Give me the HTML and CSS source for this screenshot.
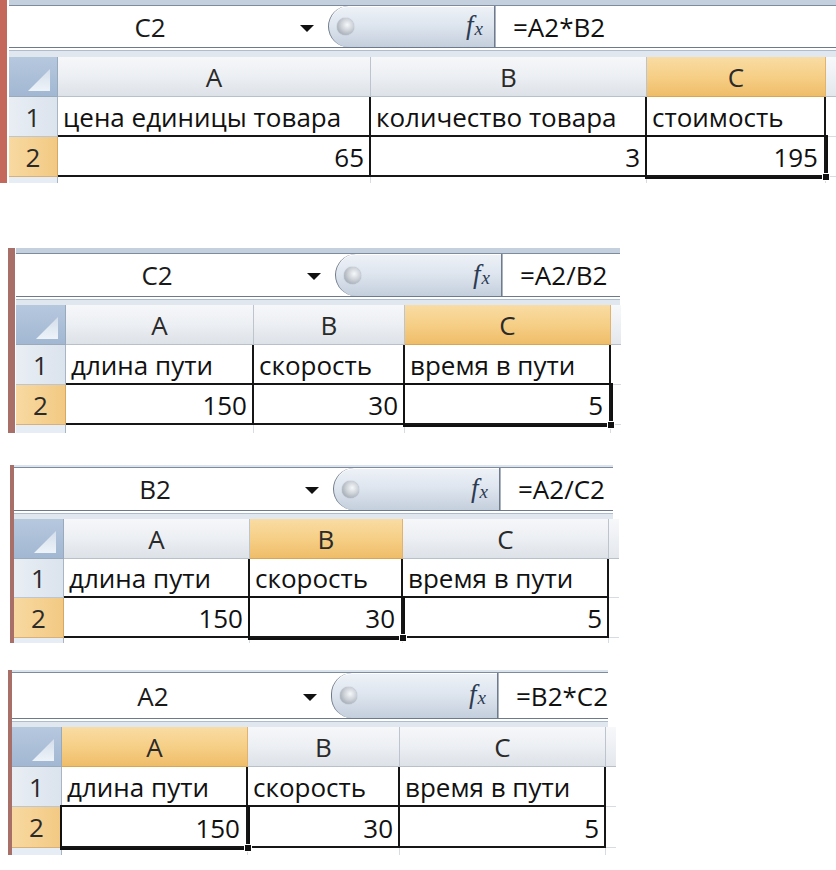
FILE: index.html
```html
<!DOCTYPE html>
<html lang="ru">
<head>
<meta charset="utf-8">
<title>Excel</title>
<link rel="stylesheet" href="styles.css">
</head>
<body>
<div class="page">

  <div class="sheet p1">
    <div class="fbar">
      <div class="namebox">C2</div>
      <div class="arrow"></div>
      <div class="pill"><span class="knob"></span><span class="fx">f<i>x</i></span></div>
      <div class="formula">=A2*B2</div>
    </div>
    <div class="fsep"></div>
    <div class="grid">
      <div class="corner"></div>
      <div class="ch">A</div>
      <div class="ch">B</div>
      <div class="ch sel">C</div>
      <div class="ch extra"></div>

      <div class="rh">1</div>
      <div class="cell">цена единицы товара</div>
      <div class="cell">количество товара</div>
      <div class="cell">стоимость</div>
      <div class="cell extra"></div>

      <div class="rh sel">2</div>
      <div class="cell num">65</div>
      <div class="cell num">3</div>
      <div class="cell num active">195<span class="handle"></span></div>
      <div class="cell extra"></div>

      <div class="rh stub"></div>
      <div class="cell stub"></div>
      <div class="cell stub"></div>
      <div class="cell stub"></div>
      <div class="cell stub extra"></div>
    </div>
  </div>

  <div class="sheet p2">
    <div class="fbar">
      <div class="namebox">C2</div>
      <div class="arrow"></div>
      <div class="pill"><span class="knob"></span><span class="fx">f<i>x</i></span></div>
      <div class="formula">=A2/B2</div>
    </div>
    <div class="fsep"></div>
    <div class="grid">
      <div class="corner"></div>
      <div class="ch">A</div>
      <div class="ch">B</div>
      <div class="ch sel">C</div>
      <div class="ch extra"></div>

      <div class="rh">1</div>
      <div class="cell">длина пути</div>
      <div class="cell">скорость</div>
      <div class="cell">время в пути</div>
      <div class="cell extra"></div>

      <div class="rh sel">2</div>
      <div class="cell num">150</div>
      <div class="cell num">30</div>
      <div class="cell num active">5<span class="handle"></span></div>
      <div class="cell extra"></div>

      <div class="rh stub"></div>
      <div class="cell stub"></div>
      <div class="cell stub"></div>
      <div class="cell stub"></div>
      <div class="cell stub extra"></div>
    </div>
  </div>

  <div class="sheet p3">
    <div class="fbar">
      <div class="namebox">B2</div>
      <div class="arrow"></div>
      <div class="pill"><span class="knob"></span><span class="fx">f<i>x</i></span></div>
      <div class="formula">=A2/C2</div>
    </div>
    <div class="fsep"></div>
    <div class="grid">
      <div class="corner"></div>
      <div class="ch">A</div>
      <div class="ch sel">B</div>
      <div class="ch">C</div>
      <div class="ch extra"></div>

      <div class="rh">1</div>
      <div class="cell">длина пути</div>
      <div class="cell">скорость</div>
      <div class="cell">время в пути</div>
      <div class="cell extra"></div>

      <div class="rh sel">2</div>
      <div class="cell num">150</div>
      <div class="cell num active">30<span class="handle"></span></div>
      <div class="cell num">5</div>
      <div class="cell extra"></div>

      <div class="rh stub"></div>
      <div class="cell stub"></div>
      <div class="cell stub"></div>
      <div class="cell stub"></div>
      <div class="cell stub extra"></div>
    </div>
  </div>

  <div class="sheet p4">
    <div class="fbar">
      <div class="namebox">A2</div>
      <div class="arrow"></div>
      <div class="pill"><span class="knob"></span><span class="fx">f<i>x</i></span></div>
      <div class="formula">=B2*C2</div>
    </div>
    <div class="fsep"></div>
    <div class="grid">
      <div class="corner"></div>
      <div class="ch sel">A</div>
      <div class="ch">B</div>
      <div class="ch">C</div>
      <div class="ch extra"></div>

      <div class="rh">1</div>
      <div class="cell">длина пути</div>
      <div class="cell">скорость</div>
      <div class="cell">время в пути</div>
      <div class="cell extra"></div>

      <div class="rh sel">2</div>
      <div class="cell num active">150<span class="handle"></span></div>
      <div class="cell num">30</div>
      <div class="cell num">5</div>
      <div class="cell extra"></div>

      <div class="rh stub"></div>
      <div class="cell stub"></div>
      <div class="cell stub"></div>
      <div class="cell stub"></div>
      <div class="cell stub extra"></div>
    </div>
  </div>

</div>
</body>
</html>
```
FILE: styles.css
```css
* { box-sizing: border-box; }

html, body {
  margin: 0;
  padding: 0;
  background: #ffffff;
}

body {
  width: 836px;
  height: 870px;
  overflow: hidden;
  font-family: "Open Sans", "Noto Sans", sans-serif;
  font-size: 26px;
  color: #111;
}

.page {
  display: flex;
  flex-direction: column;
  align-items: flex-start;
}

/* ---------- sheet wrapper ---------- */
.sheet {
  display: flex;
  flex-direction: column;
  border-left: 7px solid #a86f68;
  background: #fff;
}

.p1 { width: 836px; margin-left: 0; border-left-color: #c5685c; padding-left: 2px; }
.p2 { width: 612px; margin-left: 8px; margin-top: 65px; padding-left: 1px; }
.p3 { width: 603px; margin-left: 10px; margin-top: 32px; border-left-width: 4px; }
.p4 { width: 600px; margin-left: 8px; margin-top: 27px; border-left-width: 4px; }

/* ---------- formula bar ---------- */
.fbar {
  display: flex;
  align-items: stretch;
  background: #fff;
  border-top: 1px solid #7e8b9c;
  border-bottom: 1px solid #6e7a89;
  box-shadow: 0 -5px 0 #c4d0de;
  margin-top: 5px;
  height: 43px;
}
.p2 .fbar { height: 44px; }
.p3 .fbar { margin-top: 2px; box-shadow: 0 -2px 0 #dbe3ec; height: 44px; }
.p4 .fbar { margin-top: 2px; box-shadow: 0 -2px 0 #dbe3ec; height: 47px; }

.namebox {
  width: 282px;
  flex: none;
  display: flex;
  align-items: center;
  justify-content: center;
  color: #1a1a1a;
}

.arrow {
  flex: none;
  align-self: center;
  width: 0;
  height: 0;
  margin-left: 9px;
  margin-right: 14px;
  border-left: 7px solid transparent;
  border-right: 7px solid transparent;
  border-top: 7px solid #111;
  margin-top: 3px;
}

.pill {
  flex: none;
  width: 167px;
  display: flex;
  align-items: center;
  justify-content: space-between;
  padding: 0 11px 0 8px;
  border: 1px solid #6f7b8b;
  border-top: none;
  border-bottom: none;
  border-radius: 21px 0 0 21px;
  background: linear-gradient(#eef2f8 0%, #dfe6ef 45%, #c4cfdd 100%);
  box-shadow: inset 0 1px 0 #fff;
}

.knob {
  width: 17px;
  height: 17px;
  border-radius: 50%;
  background: radial-gradient(circle at 60% 40%, #f6f8fa 0%, #cfd4da 40%, #8c949d 100%);
  box-shadow: 0 0 1px #778;
}

.fx {
  font-family: "Liberation Serif", "DejaVu Serif", serif;
  font-style: italic;
  font-size: 27px;
  color: #2c3b52;
  line-height: 1;
  margin-top: -2px;
}
.fx i {
  font-size: 19px;
  margin-left: 1px;
  position: relative;
  top: 1px;
}

.formula {
  flex: 1;
  display: flex;
  align-items: center;
  padding-left: 17px;
  border-left: 1px solid #aab4c0;
  color: #111;
}

.fsep {
  height: 8px;
  background: linear-gradient(#ffffff 0, #ffffff 2px, #aebccd 2px, #aebccd 3px, #e1e7ee 3px);
}
.p1 .fsep { height: 9px; }

/* ---------- grid ---------- */
.grid {
  display: grid;
}
.p1 .grid { grid-template-columns: 49px 313px 276px 179px 1fr; grid-template-rows: 40px 40px 40px 6px; }
.p2 .grid { grid-template-columns: 50px 188px 151px 206px 1fr; grid-template-rows: 40px 40px 40px 8px; }
.p3 .grid { grid-template-columns: 50px 186px 153px 206px 1fr; grid-template-rows: 40px 39px 40px 5px; }
.p4 .grid { grid-template-columns: 50px 186px 152px 206px 1fr; grid-template-rows: 40px 40px 41px 7px; }

.corner {
  position: relative;
  background: linear-gradient(#b6c8de, #a2b7d2);
  border-right: 1px solid #9aaabd;
  border-bottom: 1px solid #9aaabd;
}
.corner::after {
  content: "";
  position: absolute;
  right: 7px;
  bottom: 5px;
  width: 22px;
  height: 22px;
  background: linear-gradient(#d3deeb, #eef3f9);
  clip-path: polygon(100% 0, 100% 100%, 0 100%);
}

.ch {
  display: flex;
  align-items: center;
  justify-content: center;
  background: linear-gradient(#f6f7f9 0%, #eceff3 50%, #dde2e8 100%);
  border-right: 1px solid #bcc4ce;
  border-bottom: 1px solid #b7c0cb;
  color: #2a2a2a;
}
.ch.sel {
  background: linear-gradient(#f9dca4 0%, #f6cf87 50%, #efbd69 100%);
  border-bottom-color: #d9a655;
  border-right-color: #e0b46e;
}
.ch.extra {
  border-right: none;
  background: linear-gradient(#f7f8fa, #e4e8ed);
}

.rh {
  display: flex;
  align-items: center;
  justify-content: center;
  background: linear-gradient(90deg, #e9eef4, #dbe3ed);
  border-right: 1px solid #a9b5c4;
  border-bottom: 1px solid #bcc6d2;
  color: #2a2a2a;
}
.rh.sel {
  background: linear-gradient(90deg, #f8d9a1, #f2c983);
  border-bottom-color: #d9b07a;
  border-right-color: #d8a863;
}
.rh.stub {
  background: #e7edf4;
  border-bottom: none;
}

.cell {
  position: relative;
  display: flex;
  align-items: flex-end;
  padding: 0 5px 0 5px;
  line-height: 35px;
  white-space: nowrap;
  background: #fff;
  border-right: 2px solid #161616;
  border-bottom: 2px solid #161616;
}
.cell.num { justify-content: flex-end; }
.cell.extra {
  border-right: none;
  border-bottom: 1px solid #d7dce2;
}
.cell.stub {
  border-bottom: none;
  border-right: 1px solid #d7dce2;
}
.cell.stub.extra { border-right: none; }

.cell.active {
  box-shadow: inset 0 0 0 1px #fff, 0 0 0 2px #111;
  z-index: 1;
  padding-right: 6px;
}
.handle {
  position: absolute;
  right: -6px;
  bottom: -6px;
  width: 8px;
  height: 8px;
  background: #111;
  border: 1px solid #fff;
  z-index: 2;
}
```
